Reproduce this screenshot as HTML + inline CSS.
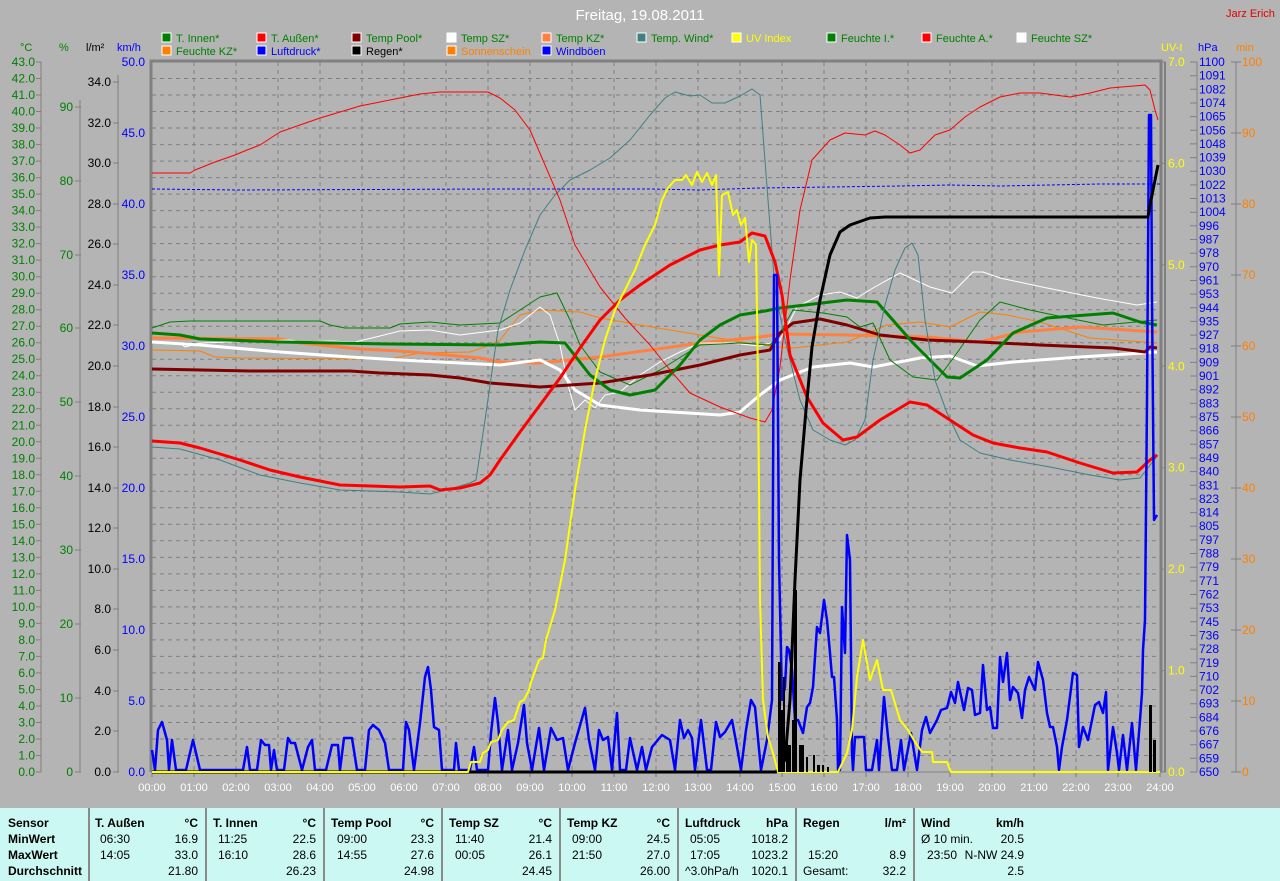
<!DOCTYPE html>
<html><head><meta charset="utf-8"><style>
html,body{margin:0;padding:0;background:#b4b4b4;}
body{width:1280px;height:881px;overflow:hidden;position:relative;font-family:"Liberation Sans",sans-serif;}
svg{position:absolute;left:0;top:0;}
.tbl{position:absolute;left:0;top:808px;width:1280px;height:73px;background:#ccf8f4;font-size:12px;color:#000;}
.col{position:absolute;top:0;height:73px;border-right:2px solid #8a8a8a;}
.r{position:absolute;white-space:nowrap;}
.b{font-weight:bold;}
</style></head><body>
<svg width="1280" height="881" viewBox="0 0 1280 881" font-family="Liberation Sans, sans-serif">
<text x="640" y="20" fill="#fff" font-size="15" text-anchor="middle">Freitag, 19.08.2011</text>
<text x="1226" y="17" fill="#e00000" font-size="11">Jarz Erich</text>
<g font-size="11">
<rect x="162" y="33" width="9" height="9" fill="#008000" stroke="#fff"/><text x="176" y="42" fill="#008000">T. Innen*</text>
<rect x="257" y="33" width="9" height="9" fill="#ff0000" stroke="#fff"/><text x="271" y="42" fill="#008000">T. Außen*</text>
<rect x="352" y="33" width="9" height="9" fill="#800000" stroke="#fff"/><text x="366" y="42" fill="#008000">Temp Pool*</text>
<rect x="447" y="33" width="9" height="9" fill="#ffffff" stroke="#fff"/><text x="461" y="42" fill="#008000">Temp SZ*</text>
<rect x="542" y="33" width="9" height="9" fill="#ff8040" stroke="#fff"/><text x="556" y="42" fill="#008000">Temp KZ*</text>
<rect x="637" y="33" width="9" height="9" fill="#408080" stroke="#fff"/><text x="651" y="42" fill="#008000">Temp. Wind*</text>
<rect x="732" y="33" width="9" height="9" fill="#ffff00" stroke="#fff"/><text x="746" y="42" fill="#ffff00">UV Index</text>
<rect x="827" y="33" width="9" height="9" fill="#008000" stroke="#fff"/><text x="841" y="42" fill="#008000">Feuchte I.*</text>
<rect x="922" y="33" width="9" height="9" fill="#ff0000" stroke="#fff"/><text x="936" y="42" fill="#008000">Feuchte A.*</text>
<rect x="1017" y="33" width="9" height="9" fill="#ffffff" stroke="#fff"/><text x="1031" y="42" fill="#008000">Feuchte SZ*</text>
<rect x="162" y="46" width="9" height="9" fill="#ff8000" stroke="#fff"/><text x="176" y="55" fill="#008000">Feuchte KZ*</text>
<rect x="257" y="46" width="9" height="9" fill="#0000ff" stroke="#fff"/><text x="271" y="55" fill="#0000ff">Luftdruck*</text>
<rect x="352" y="46" width="9" height="9" fill="#000000" stroke="#fff"/><text x="366" y="55" fill="#000">Regen*</text>
<rect x="447" y="46" width="9" height="9" fill="#ff8000" stroke="#fff"/><text x="461" y="55" fill="#ff8000">Sonnenschein</text>
<rect x="542" y="46" width="9" height="9" fill="#0000ff" stroke="#fff"/><text x="556" y="55" fill="#0000ff">Windböen</text>
</g>
<g font-size="11">
<text x="20" y="51" fill="#008000">°C</text>
<text x="59" y="51" fill="#008000">%</text>
<text x="86" y="51" fill="#000">l/m²</text>
<text x="117" y="51" fill="#0000ff">km/h</text>
<text x="1161" y="51" fill="#ffff00">UV-I</text>
<text x="1198" y="51" fill="#0000ff">hPa</text>
<text x="1236" y="51" fill="#ff8000">min</text>
</g>
<g stroke="#808080" stroke-width="1" stroke-dasharray="4 4">
<path d="M152 78.5H1160M152 95H1160M152 111.5H1160M152 128H1160M152 144.6H1160M152 161.1H1160M152 177.6H1160M152 194.1H1160M152 210.6H1160M152 227.1H1160M152 243.6H1160M152 260.1H1160M152 276.7H1160M152 293.2H1160M152 309.7H1160M152 326.2H1160M152 342.7H1160M152 359.2H1160M152 375.7H1160M152 392.2H1160M152 408.8H1160M152 425.3H1160M152 441.8H1160M152 458.3H1160M152 474.8H1160M152 491.3H1160M152 507.8H1160M152 524.3H1160M152 540.8H1160M152 557.4H1160M152 573.9H1160M152 590.4H1160M152 606.9H1160M152 623.4H1160M152 639.9H1160M152 656.4H1160M152 672.9H1160M152 689.5H1160M152 706H1160M152 722.5H1160M152 739H1160M152 755.5H1160"/>
<path d="M194 62V772M236 62V772M278 62V772M320 62V772M362 62V772M404 62V772M446 62V772M488 62V772M530 62V772M572 62V772M614 62V772M656 62V772M698 62V772M740 62V772M782 62V772M824 62V772M866 62V772M908 62V772M950 62V772M992 62V772M1034 62V772M1076 62V772M1118 62V772"/>
</g>
<g stroke="#7a7a7a" stroke-width="1">
<path d="M194 772v5M236 772v5M278 772v5M320 772v5M362 772v5M404 772v5M446 772v5M488 772v5M530 772v5M572 772v5M614 772v5M656 772v5M698 772v5M740 772v5M782 772v5M824 772v5M866 772v5M908 772v5M950 772v5M992 772v5M1034 772v5M1076 772v5M1118 772v5M152 772v5M1160 772v5"/>
</g>
<path d="M151 772V61H1161V772" fill="none" stroke="#808080" stroke-width="3"/>
<line x1="1165" y1="62" x2="1165" y2="772" stroke="#808080" stroke-width="2"/>
<line x1="152" y1="772" x2="1160" y2="772" stroke="#808080" stroke-width="1"/>
<g stroke="#808080" stroke-width="1" fill="none">
<path d="M41 62V772M80 100V772M118 75V772"/>
<path d="M36 62H41M36 78.5H41M36 95H41M36 111.5H41M36 128H41M36 144.6H41M36 161.1H41M36 177.6H41M36 194.1H41M36 210.6H41M36 227.1H41M36 243.6H41M36 260.1H41M36 276.7H41M36 293.2H41M36 309.7H41M36 326.2H41M36 342.7H41M36 359.2H41M36 375.7H41M36 392.2H41M36 408.8H41M36 425.3H41M36 441.8H41M36 458.3H41M36 474.8H41M36 491.3H41M36 507.8H41M36 524.3H41M36 540.8H41M36 557.4H41M36 573.9H41M36 590.4H41M36 606.9H41M36 623.4H41M36 639.9H41M36 656.4H41M36 672.9H41M36 689.5H41M36 706H41M36 722.5H41M36 739H41M36 755.5H41M36 772H41"/>
<path d="M75 107H81M75 181H81M75 255H81M75 328H81M75 402H81M75 476H81M75 550H81M75 624H81M75 698H81M75 772H81"/>
<path d="M113 82H119M113 123H119M113 163H119M113 204H119M113 244H119M113 285H119M113 325H119M113 366H119M113 407H119M113 447H119M113 488H119M113 528H119M113 569H119M113 609H119M113 650H119M113 691H119M113 731H119M113 772H119"/>
<path d="M1197 62V772M1236 62V772"/>
<path d="M1190 62H1197M1190 75.7H1197M1190 89.3H1197M1190 103H1197M1190 116.6H1197M1190 130.3H1197M1190 143.9H1197M1190 157.6H1197M1190 171.2H1197M1190 184.9H1197M1190 198.5H1197M1190 212.2H1197M1190 225.8H1197M1190 239.5H1197M1190 253.2H1197M1190 266.8H1197M1190 280.5H1197M1190 294.1H1197M1190 307.8H1197M1190 321.4H1197M1190 335.1H1197M1190 348.7H1197M1190 362.4H1197M1190 376H1197M1190 389.7H1197M1190 403.4H1197M1190 417H1197M1190 430.7H1197M1190 444.3H1197M1190 458H1197M1190 471.6H1197M1190 485.3H1197M1190 498.9H1197M1190 512.6H1197M1190 526.2H1197M1190 539.9H1197M1190 553.5H1197M1190 567.2H1197M1190 580.9H1197M1190 594.5H1197M1190 608.2H1197M1190 621.8H1197M1190 635.5H1197M1190 649.1H1197M1190 662.8H1197M1190 676.4H1197M1190 690.1H1197M1190 703.7H1197M1190 717.4H1197M1190 731H1197M1190 744.7H1197M1190 758.3H1197M1190 772H1197"/>
<path d="M1231 62H1241M1231 133H1241M1231 204H1241M1231 275H1241M1231 346H1241M1231 417H1241M1231 488H1241M1231 559H1241M1231 630H1241M1231 701H1241M1231 772H1241"/>
<path d="M1160 62H1166M1160 163.4H1166M1160 264.9H1166M1160 366.3H1166M1160 467.7H1166M1160 569.1H1166M1160 670.6H1166M1160 772H1166"/>
</g>
<g font-size="12" fill="#008000" text-anchor="end">
<text x="35" y="66">43.0</text><text x="35" y="82.5">42.0</text><text x="35" y="99">41.0</text><text x="35" y="115.5">40.0</text><text x="35" y="132">39.0</text><text x="35" y="148.6">38.0</text><text x="35" y="165.1">37.0</text><text x="35" y="181.6">36.0</text><text x="35" y="198.1">35.0</text><text x="35" y="214.6">34.0</text><text x="35" y="231.1">33.0</text><text x="35" y="247.6">32.0</text><text x="35" y="264.1">31.0</text><text x="35" y="280.7">30.0</text><text x="35" y="297.2">29.0</text><text x="35" y="313.7">28.0</text><text x="35" y="330.2">27.0</text><text x="35" y="346.7">26.0</text><text x="35" y="363.2">25.0</text><text x="35" y="379.7">24.0</text><text x="35" y="396.2">23.0</text><text x="35" y="412.8">22.0</text><text x="35" y="429.3">21.0</text><text x="35" y="445.8">20.0</text><text x="35" y="462.3">19.0</text><text x="35" y="478.8">18.0</text><text x="35" y="495.3">17.0</text><text x="35" y="511.8">16.0</text><text x="35" y="528.3">15.0</text><text x="35" y="544.8">14.0</text><text x="35" y="561.4">13.0</text><text x="35" y="577.9">12.0</text><text x="35" y="594.4">11.0</text><text x="35" y="610.9">10.0</text><text x="35" y="627.4">9.0</text><text x="35" y="643.9">8.0</text><text x="35" y="660.4">7.0</text><text x="35" y="676.9">6.0</text><text x="35" y="693.5">5.0</text><text x="35" y="710">4.0</text><text x="35" y="726.5">3.0</text><text x="35" y="743">2.0</text><text x="35" y="759.5">1.0</text><text x="35" y="776">0.0</text>
<text x="73" y="111">90</text><text x="73" y="185">80</text><text x="73" y="259">70</text><text x="73" y="332">60</text><text x="73" y="406">50</text><text x="73" y="480">40</text><text x="73" y="554">30</text><text x="73" y="628">20</text><text x="73" y="702">10</text><text x="73" y="776">0</text>
</g>
<g font-size="12" fill="#000" text-anchor="end">
<text x="111" y="86">34.0</text><text x="111" y="127">32.0</text><text x="111" y="167">30.0</text><text x="111" y="208">28.0</text><text x="111" y="248">26.0</text><text x="111" y="289">24.0</text><text x="111" y="329">22.0</text><text x="111" y="370">20.0</text><text x="111" y="411">18.0</text><text x="111" y="451">16.0</text><text x="111" y="492">14.0</text><text x="111" y="532">12.0</text><text x="111" y="573">10.0</text><text x="111" y="613">8.0</text><text x="111" y="654">6.0</text><text x="111" y="695">4.0</text><text x="111" y="735">2.0</text><text x="111" y="776">0.0</text>
</g>
<g font-size="12" fill="#0000ff" text-anchor="end">
<text x="145" y="66">50.0</text><text x="145" y="137">45.0</text><text x="145" y="208">40.0</text><text x="145" y="279">35.0</text><text x="145" y="350">30.0</text><text x="145" y="421">25.0</text><text x="145" y="492">20.0</text><text x="145" y="563">15.0</text><text x="145" y="634">10.0</text><text x="145" y="705">5.0</text><text x="145" y="776">0.0</text>
</g>
<g font-size="12" fill="#ffff00">
<text x="1168" y="66">7.0</text><text x="1168" y="167.4">6.0</text><text x="1168" y="268.9">5.0</text><text x="1168" y="370.3">4.0</text><text x="1168" y="471.7">3.0</text><text x="1168" y="573.1">2.0</text><text x="1168" y="674.6">1.0</text><text x="1168" y="776">0.0</text>
</g>
<g font-size="12" fill="#ff8000">
<text x="1242" y="66">100</text><text x="1242" y="137">90</text><text x="1242" y="208">80</text><text x="1242" y="279">70</text><text x="1242" y="350">60</text><text x="1242" y="421">50</text><text x="1242" y="492">40</text><text x="1242" y="563">30</text><text x="1242" y="634">20</text><text x="1242" y="705">10</text><text x="1242" y="776">0</text>
</g>
<g font-size="12" fill="#0000ff">
<text x="1199" y="66">1100</text><text x="1199" y="79.7">1091</text><text x="1199" y="93.3">1082</text><text x="1199" y="107">1074</text><text x="1199" y="120.6">1065</text><text x="1199" y="134.3">1056</text><text x="1199" y="147.9">1048</text><text x="1199" y="161.6">1039</text><text x="1199" y="175.2">1030</text><text x="1199" y="188.9">1022</text><text x="1199" y="202.5">1013</text><text x="1199" y="216.2">1004</text><text x="1199" y="229.8">996</text><text x="1199" y="243.5">987</text><text x="1199" y="257.2">978</text><text x="1199" y="270.8">970</text><text x="1199" y="284.5">961</text><text x="1199" y="298.1">953</text><text x="1199" y="311.8">944</text><text x="1199" y="325.4">935</text><text x="1199" y="339.1">927</text><text x="1199" y="352.7">918</text><text x="1199" y="366.4">909</text><text x="1199" y="380">901</text><text x="1199" y="393.7">892</text><text x="1199" y="407.4">883</text><text x="1199" y="421">875</text><text x="1199" y="434.7">866</text><text x="1199" y="448.3">857</text><text x="1199" y="462">849</text><text x="1199" y="475.6">840</text><text x="1199" y="489.3">831</text><text x="1199" y="502.9">823</text><text x="1199" y="516.6">814</text><text x="1199" y="530.2">805</text><text x="1199" y="543.9">797</text><text x="1199" y="557.5">788</text><text x="1199" y="571.2">779</text><text x="1199" y="584.9">771</text><text x="1199" y="598.5">762</text><text x="1199" y="612.2">753</text><text x="1199" y="625.8">745</text><text x="1199" y="639.5">736</text><text x="1199" y="653.1">728</text><text x="1199" y="666.8">719</text><text x="1199" y="680.4">710</text><text x="1199" y="694.1">702</text><text x="1199" y="707.7">693</text><text x="1199" y="721.4">684</text><text x="1199" y="735">676</text><text x="1199" y="748.7">667</text><text x="1199" y="762.3">659</text><text x="1199" y="776">650</text>
</g>
<g font-size="11" fill="#fff" text-anchor="middle">
<text x="152" y="791">00:00</text><text x="194" y="791">01:00</text><text x="236" y="791">02:00</text><text x="278" y="791">03:00</text><text x="320" y="791">04:00</text><text x="362" y="791">05:00</text><text x="404" y="791">06:00</text><text x="446" y="791">07:00</text><text x="488" y="791">08:00</text><text x="530" y="791">09:00</text><text x="572" y="791">10:00</text><text x="614" y="791">11:00</text><text x="656" y="791">12:00</text><text x="698" y="791">13:00</text><text x="740" y="791">14:00</text><text x="782" y="791">15:00</text><text x="824" y="791">16:00</text><text x="866" y="791">17:00</text><text x="908" y="791">18:00</text><text x="950" y="791">19:00</text><text x="992" y="791">20:00</text><text x="1034" y="791">21:00</text><text x="1076" y="791">22:00</text><text x="1118" y="791">23:00</text><text x="1160" y="791">24:00</text>
</g>
<g fill="none" stroke-linejoin="round">
<polyline stroke="#0000ff" stroke-width="1" stroke-dasharray="3 2" points="152,189 240,190 500,189 650,189 700,190 760,188 830,187 900,186 950,185 1000,186 1050,185 1100,184 1160,184"/>
<polyline stroke="#ff8000" stroke-width="1" points="152,350 200,351 215,357 240,358 390,359 400,357 420,353 470,352 490,345 500,340 520,315 540,310 580,312 600,318 640,325 700,335 760,345 780,347 793,348 847,342 887,325 920,322 950,327 980,312 1007,315 1040,322 1090,338 1157,343"/>
<polyline stroke="#ff8040" stroke-width="3" points="152,338 280,339 300,343 330,346 360,349 400,351 480,358 500,362 540,363 600,357 650,350 700,343 760,337 780,334 847,335 927,337 980,342 1020,332 1080,327 1157,332"/>
<polyline stroke="#ffffff" stroke-width="1" points="152,342 180,343 185,347 200,343 290,340 300,342 330,341 355,342 380,336 400,331 430,330 460,335 500,330 520,323 540,307 550,315 560,345 568,385 575,410 585,400 595,408 605,395 620,392 640,375 660,362 680,352 700,343 730,343 760,346 780,340 797,307 820,295 840,292 857,298 873,288 900,273 930,287 952,293 973,272 983,272 1000,278 1047,288 1097,298 1137,305 1157,302"/>
<polyline stroke="#ffffff" stroke-width="3" points="152,342 200,345 280,352 350,357 400,360 460,363 500,365 540,360 560,370 575,390 600,405 640,410 720,415 740,412 760,395 780,380 813,367 850,363 873,367 920,358 950,356 977,366 1013,362 1080,357 1143,353 1157,352"/>
<polyline stroke="#008000" stroke-width="1" points="152,328 170,322 190,321 320,321 330,325 345,328 390,328 400,324 430,322 460,325 500,323 520,310 540,297 557,293 570,320 580,345 600,372 630,385 660,370 700,345 740,343 770,345 780,333 793,310 823,313 847,317 860,327 873,323 890,360 913,377 937,380 957,353 980,320 1000,302 1030,310 1063,317 1103,325 1157,320"/>
<polyline stroke="#800000" stroke-width="3" points="152,369 250,371 350,371 380,373 430,375 460,378 490,383 540,387 600,383 650,375 700,365 740,355 770,350 780,333 793,323 820,319 847,325 880,335 927,340 980,342 1040,345 1113,348 1145,352 1150,347 1157,348"/>
<polyline stroke="#008000" stroke-width="3" points="152,333 180,335 200,339 280,342 390,344 500,345 540,342 565,343 590,375 610,390 630,395 655,390 680,365 700,340 720,325 740,315 765,311 780,308 847,300 877,302 913,343 947,377 960,378 987,360 1013,333 1047,318 1113,313 1140,322 1157,325"/>
<polyline stroke="#408080" stroke-width="1" points="152,447 180,449 220,460 260,475 300,483 340,490 400,492 430,494 450,489 470,483 476,480 485,420 498,330 510,290 525,250 540,215 555,195 570,180 590,170 610,158 630,140 650,115 665,98 675,92 690,96 700,95 712,103 725,103 740,96 752,89 760,95 768,200 775,290 785,340 800,400 813,430 830,440 845,445 855,440 865,420 873,360 885,305 895,270 905,248 912,243 918,255 925,320 935,380 947,413 960,440 980,453 1010,460 1050,467 1090,475 1120,480 1140,478 1158,455"/>
<polyline stroke="#ff0000" stroke-width="1" points="152,173 190,173 195,170 215,162 235,155 247,150 260,145 280,132 300,125 320,118 340,112 360,106 380,102 400,98 420,94 440,92 488,92 500,98 515,110 530,130 545,165 560,200 575,245 600,287 625,318 650,345 670,370 690,393 720,407 750,418 765,422 772,410 780,367 790,280 800,210 812,160 830,140 845,133 865,135 875,131 885,135 900,145 910,153 920,150 935,135 950,130 965,117 980,107 1000,97 1020,93 1040,93 1055,95 1070,97 1090,93 1110,88 1145,85 1150,90 1155,110 1158,120"/>
<polyline stroke="#ff0000" stroke-width="3" points="152,441 180,443 200,448 240,460 270,470 300,477 340,485 400,487 430,486 440,490 460,488 480,483 490,475 500,460 520,432 540,405 560,378 580,348 600,320 620,300 640,285 670,265 700,250 720,245 740,242 752,233 765,236 775,262 782,295 790,355 807,397 823,423 843,440 857,437 880,420 910,402 927,405 950,420 973,435 993,443 1020,448 1047,452 1080,463 1113,473 1137,472 1150,460 1157,455"/>
<polyline stroke="#0000ff" stroke-width="2.5" points="152,750 155,770 158,730 162,722 167,740 169,770 172,740 176,770 186,770 193,740 200,770 243,770 247,747 250,770 257,770 261,740 265,745 269,745 271,770 274,750 277,770 284,770 288,738 291,743 295,743 302,770 308,747 312,740 315,770 326,770 332,745 338,745 340,770 344,738 352,738 357,770 365,770 369,730 373,725 379,730 385,743 389,770 403,770 406,722 409,730 414,770 420,723 425,677 428,667 431,690 434,727 439,730 442,770 454,770 456,743 459,770 470,770 474,747 477,770 488,770 491,733 495,698 498,723 502,770 508,730 512,770 518,743 524,705 527,743 532,770 539,728 544,770 551,728 557,740 563,738 568,770 575,743 581,722 585,708 589,740 595,770 599,730 603,740 608,737 612,770 617,713 620,770 626,770 630,738 637,770 642,747 646,770 652,747 662,735 670,740 675,770 680,720 684,738 688,730 692,738 695,770 701,720 707,770 711,770 716,722 720,737 725,732 732,720 737,747 741,770 746,730 751,700 755,707 761,770 767,740 772,700 774,275 777,275 779,560 782,700 785,687 787,647 789,650 792,670 795,720 798,720 803,733 807,707 810,703 813,687 817,627 820,633 824,600 827,620 830,653 832,677 834,677 837,720 838,770 840,770 842,607 845,653 847,535 850,560 852,753 853,770 855,737 864,737 866,770 872,770 877,740 879,770 884,697 888,737 892,770 897,770 901,740 904,770 911,733 917,770 922,730 926,717 930,733 937,720 941,710 947,708 951,692 955,703 958,682 964,710 968,688 972,690 975,715 980,713 983,665 987,710 990,707 993,728 997,728 1000,657 1003,682 1007,653 1010,700 1013,687 1018,693 1022,718 1025,690 1029,677 1035,690 1038,662 1043,680 1047,713 1050,727 1053,727 1057,747 1059,770 1062,747 1067,720 1073,673 1077,675 1079,747 1083,727 1088,740 1095,705 1099,702 1103,713 1106,692 1108,770 1113,727 1117,753 1119,770 1123,735 1127,770 1132,723 1136,770 1140,720 1142,693 1143,650 1145,620 1147,400 1149,115 1151,115 1152,300 1154,520 1157,515"/>
<polyline stroke="#000000" stroke-width="3" points="152,772 776,772 785,760 790,700 795,580 800,480 806,410 812,347 820,300 830,255 840,232 850,225 870,218 885,217 1148,217 1150,205 1154,185 1158,165"/>
<polyline stroke="#ffff00" stroke-width="2" points="152,772 468,772 471,762 480,762 483,753 488,750 491,742 498,740 502,730 508,722 514,720 520,702 524,700 529,690 531,682 539,660 543,658 546,640 555,610 565,560 575,490 585,430 595,380 605,340 615,310 625,290 635,270 645,245 655,225 662,200 668,188 675,180 682,180 686,175 692,185 697,172 702,182 707,173 712,185 716,175 719,275 722,195 728,192 733,215 737,210 741,225 745,218 749,262 752,240 756,245 758,380 760,600 763,700 768,737 773,753 778,772 838,772 847,753 852,730 857,677 863,640 870,680 877,660 883,690 891,690 900,720 908,730 915,742 922,752 932,752 933,762 947,762 951,772 1160,772"/>
</g>
<g fill="#000">
<rect x="778" y="662" width="3" height="110"/><rect x="781" y="710" width="2" height="62"/><rect x="783" y="677" width="2" height="95"/><rect x="786" y="730" width="2" height="42"/><rect x="788" y="745" width="3" height="27"/><rect x="792" y="720" width="2" height="52"/><rect x="794" y="590" width="3" height="182"/><rect x="799" y="745" width="5" height="27"/><rect x="806" y="757" width="2" height="15"/><rect x="813" y="755" width="2" height="17"/><rect x="817" y="765" width="3" height="7"/><rect x="822" y="765" width="2" height="7"/><rect x="827" y="767" width="2" height="5"/>
<rect x="1149" y="705" width="3" height="67"/><rect x="1153" y="740" width="3" height="32"/>
</g>
</svg>
<div class="tbl">
<div class="col" style="left:0;width:88px"></div>
<div class="col" style="left:89px;width:116px"></div>
<div class="col" style="left:207px;width:116px"></div>
<div class="col" style="left:325px;width:116px"></div>
<div class="col" style="left:443px;width:116px"></div>
<div class="col" style="left:561px;width:116px"></div>
<div class="col" style="left:679px;width:116px"></div>
<div class="col" style="left:797px;width:116px"></div>
<div class="r b" style="left:8px;top:8px">Sensor</div>
<div class="r b" style="left:8px;top:24px">MinWert</div>
<div class="r b" style="left:8px;top:40px">MaxWert</div>
<div class="r b" style="left:8px;top:56px">Durchschnitt</div>

<div class="r b" style="left:95px;top:8px">T. Außen</div><div class="r b" style="right:1082px;top:8px">°C</div>
<div class="r" style="left:100px;top:24px">06:30</div><div class="r" style="right:1082px;top:24px">16.9</div>
<div class="r" style="left:100px;top:40px">14:05</div><div class="r" style="right:1082px;top:40px">33.0</div>
<div class="r" style="right:1082px;top:56px">21.80</div>

<div class="r b" style="left:213px;top:8px">T. Innen</div><div class="r b" style="right:964px;top:8px">°C</div>
<div class="r" style="left:218px;top:24px">11:25</div><div class="r" style="right:964px;top:24px">22.5</div>
<div class="r" style="left:218px;top:40px">16:10</div><div class="r" style="right:964px;top:40px">28.6</div>
<div class="r" style="right:964px;top:56px">26.23</div>

<div class="r b" style="left:331px;top:8px">Temp Pool</div><div class="r b" style="right:846px;top:8px">°C</div>
<div class="r" style="left:337px;top:24px">09:00</div><div class="r" style="right:846px;top:24px">23.3</div>
<div class="r" style="left:337px;top:40px">14:55</div><div class="r" style="right:846px;top:40px">27.6</div>
<div class="r" style="right:846px;top:56px">24.98</div>

<div class="r b" style="left:449px;top:8px">Temp SZ</div><div class="r b" style="right:728px;top:8px">°C</div>
<div class="r" style="left:455px;top:24px">11:40</div><div class="r" style="right:728px;top:24px">21.4</div>
<div class="r" style="left:455px;top:40px">00:05</div><div class="r" style="right:728px;top:40px">26.1</div>
<div class="r" style="right:728px;top:56px">24.45</div>

<div class="r b" style="left:567px;top:8px">Temp KZ</div><div class="r b" style="right:610px;top:8px">°C</div>
<div class="r" style="left:572px;top:24px">09:00</div><div class="r" style="right:610px;top:24px">24.5</div>
<div class="r" style="left:572px;top:40px">21:50</div><div class="r" style="right:610px;top:40px">27.0</div>
<div class="r" style="right:610px;top:56px">26.00</div>

<div class="r b" style="left:685px;top:8px">Luftdruck</div><div class="r b" style="right:492px;top:8px">hPa</div>
<div class="r" style="left:690px;top:24px">05:05</div><div class="r" style="right:492px;top:24px">1018.2</div>
<div class="r" style="left:690px;top:40px">17:05</div><div class="r" style="right:492px;top:40px">1023.2</div>
<div class="r" style="left:685px;top:56px">^3.0hPa/h</div><div class="r" style="right:492px;top:56px">1020.1</div>

<div class="r b" style="left:803px;top:8px">Regen</div><div class="r b" style="right:374px;top:8px">l/m²</div>
<div class="r" style="left:808px;top:40px">15:20</div><div class="r" style="right:374px;top:40px">8.9</div>
<div class="r" style="left:803px;top:56px">Gesamt:</div><div class="r" style="right:374px;top:56px">32.2</div>

<div class="r b" style="left:921px;top:8px">Wind</div><div class="r b" style="right:256px;top:8px">km/h</div>
<div class="r" style="left:921px;top:24px">Ø 10 min.</div><div class="r" style="right:256px;top:24px">20.5</div>
<div class="r" style="left:927px;top:40px">23:50</div><div class="r" style="right:256px;top:40px">N-NW 24.9</div>
<div class="r" style="right:256px;top:56px">2.5</div>
</div>
</body></html>
